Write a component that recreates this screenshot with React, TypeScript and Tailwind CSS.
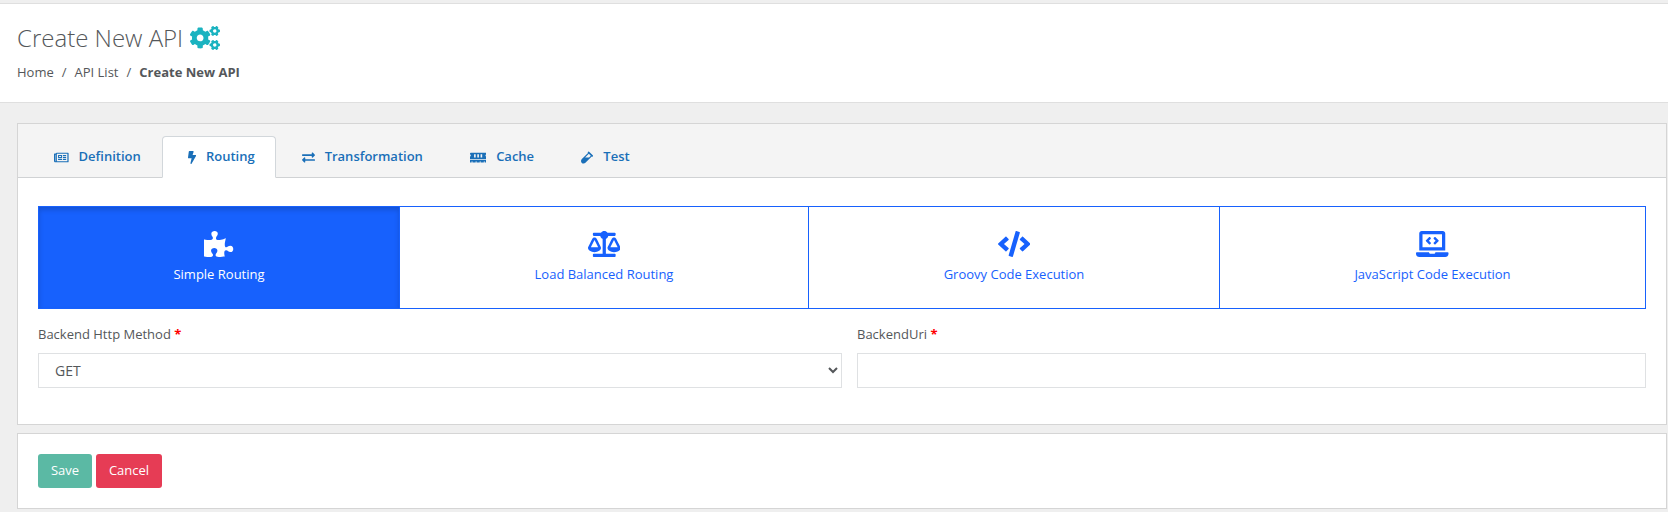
import type { ReactNode } from "react";
import type { IconType } from "react-icons";
import {
  FaBalanceScale,
  FaBolt,
  FaCode,
  FaCogs,
  FaExchangeAlt,
  FaLaptopCode,
  FaMemory,
  FaPuzzlePiece,
  FaRegNewspaper,
  FaVial,
} from "react-icons/fa";

type Tab = { label: string; icon: IconType; iconWidth: string; active?: boolean };
type Route = Tab & { width: string };

const tabs: Tab[] = [
  { label: "Definition", icon: FaRegNewspaper, iconWidth: "w-[14.6px]" },
  { label: "Routing", icon: FaBolt, iconWidth: "w-[8.1px]", active: true },
  { label: "Transformation", icon: FaExchangeAlt, iconWidth: "w-[13px]" },
  { label: "Cache", icon: FaMemory, iconWidth: "w-[16.25px]" },
  { label: "Test", icon: FaVial, iconWidth: "w-[12.2px]" },
];

const routes: Route[] = [
  { label: "Simple Routing", icon: FaPuzzlePiece, iconWidth: "w-[29.25px]", width: "w-[362px]", active: true },
  { label: "Load Balanced Routing", icon: FaBalanceScale, iconWidth: "w-[32.5px]", width: "w-[410px]" },
  { label: "Groovy Code Execution", icon: FaCode, iconWidth: "w-[32.5px]", width: "w-[412px]" },
  { label: "JavaScript Code Execution", icon: FaLaptopCode, iconWidth: "w-[32.5px]", width: "w-[427px]" },
];

function TabItem({ label, icon: Icon, iconWidth, active }: Tab) {
  return (
    <button
      className={`flex h-[42px] shrink-0 items-center gap-[10px] rounded-t-[4px] border pr-5 pl-[25px] text-[13px] font-semibold text-[#1a6fb8] ${
        active ? "border-[#d2d7db] border-b-white bg-white" : "border-transparent"
      }`}
    >
      <Icon className={`h-[13px] shrink-0 ${iconWidth}`} />
      {label}
    </button>
  );
}

function RouteButton({ label, icon: Icon, iconWidth, width, active }: Route) {
  return (
    <button
      className={`-ml-px flex h-[103px] shrink-0 flex-col items-center border border-[#1761fd] pt-6 text-[13px] first:ml-0 ${width} ${
        active
          ? "bg-[#1761fd] text-white shadow-[inset_0_3px_5px_rgba(0,0,0,0.16)]"
          : "bg-white text-[#1761fd]"
      }`}
    >
      <Icon className={`h-[26px] ${iconWidth}`} />
      <span className="mt-[7px] leading-5">{label}</span>
    </button>
  );
}

function Label({ children }: { children: ReactNode }) {
  return (
    <label className="mb-[9px] block text-[13px] leading-5">
      {children} <span className="font-bold text-[#ff0000]">*</span>
    </label>
  );
}

export default function App() {
  return (
    <div className="h-[512px] overflow-hidden bg-[#efefef] pt-[3px] font-['Open_Sans',sans-serif] text-[13px] text-[#54575a]">
      <header className="h-[100px] border-y border-[#dfdfdf] bg-white pl-[17px]">
        <h1 className="flex items-center gap-[7px] pt-[18px] text-2xl leading-8 font-light">
          Create New API
          <FaCogs className="h-6 w-[30px] text-[#1ab3c0]" />
        </h1>
        <nav className="mt-2 flex gap-2 leading-5">
          <a>Home</a>
          <span>/</span>
          <a>API List</a>
          <span>/</span>
          <strong className="font-bold">Create New API</strong>
        </nav>
      </header>

      <main className="mt-5 ml-[17px] flex w-[1650px] flex-col gap-2">
        <section className="h-[302px] border border-[#d5d5d5] bg-white">
          <div className="flex h-[54px] items-end border-b border-[#d0d2d4] bg-[#f4f4f4] pl-[10px]">
            <div className="-mb-px flex">
              {tabs.map((tab) => (
                <TabItem key={tab.label} {...tab} />
              ))}
            </div>
          </div>
          <div className="pt-7 pl-5">
            <div className="flex">
              {routes.map((route) => (
                <RouteButton key={route.label} {...route} />
              ))}
            </div>
            <div className="mt-[15px] flex gap-[15px]">
              <div className="w-[804px]">
                <Label>Backend Http Method</Label>
                <div className="relative">
                  <select className="block h-[35px] w-full appearance-none border border-[#dfe1e3] bg-white px-4 text-sm">
                    <option>GET</option>
                  </select>
                  <svg
                    viewBox="0 0 10 7"
                    className="pointer-events-none absolute top-[14px] right-1 h-[7px] w-[10px] fill-none stroke-current stroke-2"
                  >
                    <path d="M1 1l4 4 4-4" />
                  </svg>
                </div>
              </div>
              <div className="w-[789px]">
                <Label>BackendUri</Label>
                <input className="block h-[35px] w-full border border-[#dfe1e3] bg-white px-4 text-sm" />
              </div>
            </div>
          </div>
        </section>

        <section className="flex h-[76px] gap-1 border border-[#d5d5d5] bg-white pt-5 pl-5 text-white">
          <button className="h-[34px] w-[54px] rounded-[3px] bg-[#5bb9a4]">Save</button>
          <button className="h-[34px] w-[66px] rounded-[3px] bg-[#e63c55]">Cancel</button>
        </section>
      </main>
    </div>
  );
}
